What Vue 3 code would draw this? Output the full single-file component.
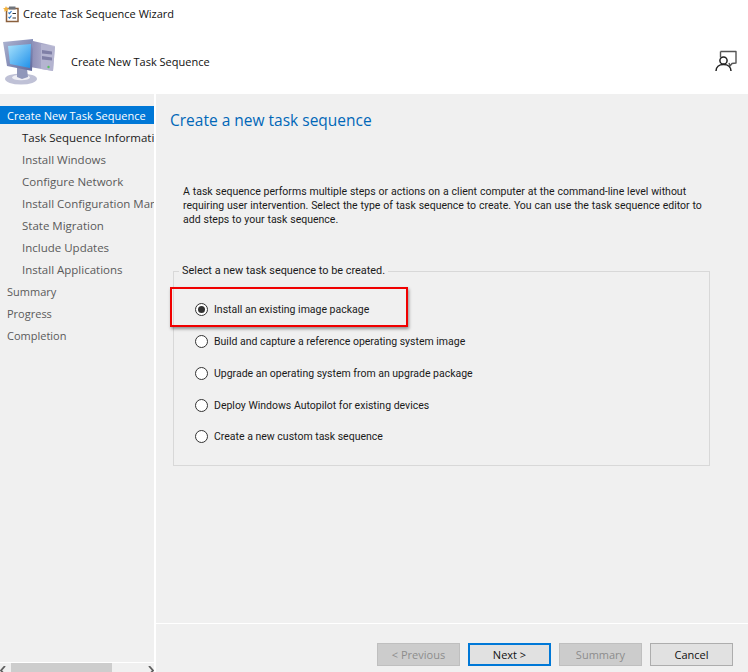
<script setup>
const steps = [
  { label: 'Create New Task Sequence', active: true },
  { label: 'Task Sequence Information', sub: true, current: true },
  { label: 'Install Windows', sub: true },
  { label: 'Configure Network', sub: true },
  { label: 'Install Configuration Manager', sub: true },
  { label: 'State Migration', sub: true },
  { label: 'Include Updates', sub: true },
  { label: 'Install Applications', sub: true },
  { label: 'Summary' },
  { label: 'Progress' },
  { label: 'Completion' },
]
const options = [
  'Install an existing image package',
  'Build and capture a reference operating system image',
  'Upgrade an operating system from an upgrade package',
  'Deploy Windows Autopilot for existing devices',
  'Create a new custom task sequence',
]
</script>

<template>
  <div class="window">
    <div class="titlebar">
      <svg class="title-icon" width="18" height="18" viewBox="0 0 18 18">
        <rect x="4.500" y="3.500" width="11.500" height="13" fill="#fff" stroke="#8a5f3c" stroke-width="1.500"/>
        <rect x="7" y="1.500" width="6.500" height="3" fill="#70757c"/>
        <path d="M6.500 7.500l1 1L9.500 6M6.500 12l1 1 2-2.500" stroke="#2a78c8" stroke-width="1.200" fill="none"/>
        <path d="M10.500 8.500h3.500M10.500 13h3.500" stroke="#333" stroke-width="1"/>
        <path d="M4 1l.9 2 2.100.3-1.600 1.400.5 2.100L4 5.700 2.100 6.800l.5-2.100L1 3.300 3.100 3z" fill="#f4b23a"/>
      </svg>
      <span>Create Task Sequence Wizard</span>
    </div>
    <div class="banner">
      <svg class="computer" width="56" height="56" viewBox="0 0 56 56">
        <defs>
          <linearGradient id="scr" x1="0" y1="0" x2="1" y2="1">
            <stop offset="0" stop-color="#a8e2fc"/>
            <stop offset="1" stop-color="#1f90ea"/>
          </linearGradient>
          <linearGradient id="tower" x1="0" y1="0" x2="1" y2="0">
            <stop offset="0" stop-color="#8a8ab4"/>
            <stop offset="1" stop-color="#c4c4da"/>
          </linearGradient>
          <linearGradient id="bez" x1="0" y1="0" x2="1" y2="1">
            <stop offset="0" stop-color="#aeb5d2"/>
            <stop offset="1" stop-color="#5f689c"/>
          </linearGradient>
        </defs>
        <path d="M33 5l22 5-2 25-23-4z" fill="url(#tower)"/>
        <path d="M41 8l14 3-2 24-12-2z" fill="#b4b4d0"/>
        <path d="M42 14l10 1.500v3l-10-1zM42 20l10 1.500v3l-10-1z" fill="#7f7fa6"/>
        <circle cx="48.500" cy="31" r="1.200" fill="#58c060"/>
        <ellipse cx="21" cy="43" rx="16" ry="5.500" fill="#bfc1d6"/>
        <ellipse cx="21" cy="41.500" rx="9" ry="2.800" fill="#eeeef4"/>
        <path d="M17 31l10 2 1 8-6 2-5-2z" fill="#9097ba"/>
        <path d="M3 6l30-3-1 32-25-5z" fill="url(#bez)"/>
        <path d="M8 10l23-2-1 24-20-4z" fill="url(#scr)"/>
      </svg>
      <span class="banner-text">Create New Task Sequence</span>
      <svg class="help" width="22" height="24" viewBox="0 0 22 24">
        <path d="M5.500 2.500H21V14l-4 .5-2 2.500-1-3" fill="#fff" stroke="#555" stroke-width="1.400" stroke-linejoin="round"/>
        <path d="M5.500 2.500v6" stroke="#555" stroke-width="1.400"/>
        <circle cx="8.500" cy="11.500" r="3.600" fill="#fff" stroke="#222" stroke-width="1.500"/>
        <path d="M1 22c0-4 3-6.500 7.500-6.500S16 18 16 22" fill="#fff" stroke="#222" stroke-width="1.500"/>
      </svg>
    </div>
    <div class="body">
      <aside class="side">
        <ul class="steps">
          <li v-for="s in steps" :key="s.label" class="step" :class="{ sub: s.sub, active: s.active, current: s.current }">
            <span class="step-label">{{ s.label }}</span>
          </li>
        </ul>
        <div class="hscroll">
          <svg class="arrow" width="6" height="9" viewBox="0 0 6 9"><path d="M5 0L1 4.500 5 9" fill="none" stroke="#606060" stroke-width="1.800"/></svg>
          <div class="track"><div class="thumb"></div></div>
          <svg class="arrow" width="6" height="9" viewBox="0 0 6 9"><path d="M1 0l4 4.500L1 9" fill="none" stroke="#606060" stroke-width="1.800"/></svg>
        </div>
      </aside>
      <main class="main">
        <div class="content">
          <h1 class="heading">Create a new task sequence</h1>
          <p class="intro">A task sequence performs multiple steps or actions on a client computer at the command-line level without requiring user intervention. Select the type of task sequence to create. You can use the task sequence editor to add steps to your task sequence.</p>
          <fieldset class="group">
            <legend class="legend">Select a new task sequence to be created.</legend>
            <div class="options">
              <label v-for="(o, i) in options" :key="o" class="option">
                <span class="radio" :class="{ on: i === 0 }"></span>
                <span>{{ o }}</span>
              </label>
            </div>
            <div class="callout"></div>
          </fieldset>
        </div>
        <footer class="footer">
          <button class="btn" disabled>&lt; Previous</button>
          <button class="btn primary">Next &gt;</button>
          <button class="btn" disabled>Summary</button>
          <button class="btn">Cancel</button>
        </footer>
      </main>
    </div>
  </div>
</template>

<style>
html, body { margin: 0; padding: 0; background: #fff; }
</style>

<style scoped>
.window {
  width: 748px;
  height: 672px;
  overflow: hidden;
  display: flex;
  flex-direction: column;
  background: #fff;
  font-family: "Open Sans", "Liberation Sans", sans-serif;
  font-size: 11px;
  color: #1a1a1a;
}
.titlebar {
  height: 27px;
  flex: none;
  display: flex;
  align-items: center;
  gap: 3px;
  padding-left: 2px;
  color: #111;
}
.title-icon { flex: none; }
.banner {
  height: 67px;
  flex: none;
  display: flex;
  align-items: center;
  padding: 0 11px 0 0;
  color: #111;
}
.computer { flex: none; margin: 6px 15px 0 0; }
.banner-text { flex: 1; margin-top: 1px; }
.help { flex: none; }
.body {
  flex: 1;
  min-height: 0;
  display: flex;
  gap: 2px;
}
.side {
  width: 154px;
  flex: none;
  background: #f0f0f0;
  display: flex;
  flex-direction: column;
  overflow: hidden;
}
.steps {
  list-style: none;
  margin: 0;
  padding: 12px 0 0;
  flex: 1;
}
.step {
  height: 22px;
  display: flex;
  align-items: center;
  padding-left: 7px;
  white-space: nowrap;
  overflow: hidden;
  color: #5a5a5a;
}
.step.sub { padding-left: 22px; font-size: 11.500px; }
.step.current { color: #1a1a1a; }
.step.active {
  height: 18px;
  margin-bottom: 2px;
  background: #0078d7;
  color: #fff;
}
.hscroll {
  height: 9px;
  flex: none;
  margin-top: 1px;
  display: flex;
  align-items: center;
  overflow: hidden;
  box-shadow: 0 -1px 0 #fff;
}
.arrow { flex: none; margin-top: 5px; }
.track { flex: 1; height: 100%; padding-left: 5px; }
.thumb { width: 101px; height: 100%; background: #cdcdcd; }
.main {
  flex: 1;
  min-width: 0;
  display: flex;
  flex-direction: column;
  background: #f0f0f0;
}
.content {
  flex: 1;
  min-height: 0;
  padding: 15px 38px 0 14px;
  font-family: "Roboto", "Liberation Sans", sans-serif;
  font-size: 10.500px;
}
.heading {
  margin: 0;
  font-family: "Open Sans", "Liberation Sans", sans-serif;
  font-size: 15.500px;
  line-height: 22px;
  font-weight: 400;
  color: #0067b8;
}
.intro {
  margin: 54px 0 0 13px;
  line-height: 14px;
  word-spacing: 0.300px;
  color: #1a1a1a;
  width: 530px;
}
.group {
  position: relative;
  margin: 37px 0 0 3px;
  padding: 0;
  height: 202px;
  box-sizing: border-box;
  border: 1px solid #d8d8d8;
}
.legend {
  margin-left: 5px;
  padding: 0 3px;
  line-height: 14px;
  font-size: 10.900px;
  color: #1a1a1a;
}
.options {
  display: flex;
  flex-direction: column;
  padding: 16px 0 0 21px;
}
.option {
  height: 31.750px;
  display: flex;
  align-items: center;
  gap: 6px;
}
.radio {
  width: 13px;
  height: 13px;
  flex: none;
  box-sizing: border-box;
  border: 1px solid #333;
  border-radius: 50%;
  background: #fff;
  display: flex;
  align-items: center;
  justify-content: center;
}
.radio.on::after {
  content: "";
  width: 7px;
  height: 7px;
  border-radius: 50%;
  background: #333;
}
.callout {
  position: absolute;
  left: -4px;
  top: 9px;
  width: 238px;
  height: 40px;
  box-sizing: border-box;
  border: 2px solid #f00000;
  box-shadow: 1px 2px 3px rgba(0, 0, 0, 0.4);
  pointer-events: none;
}
.footer {
  flex: none;
  height: 49px;
  border-top: 1px solid #fff;
  display: flex;
  justify-content: flex-end;
  align-items: flex-start;
  gap: 8px;
  padding: 19px 15px 0 0;
  box-sizing: border-box;
}
.btn {
  width: 83px;
  height: 23px;
  box-sizing: border-box;
  padding: 0;
  background: #e1e1e1;
  border: 1px solid #adadad;
  font: inherit;
  color: #111;
}
.btn:disabled {
  background: #cccccc;
  border-color: #bfbfbf;
  color: #8c8c8c;
}
.btn.primary {
  border: 2px solid #0078d7;
}
</style>
